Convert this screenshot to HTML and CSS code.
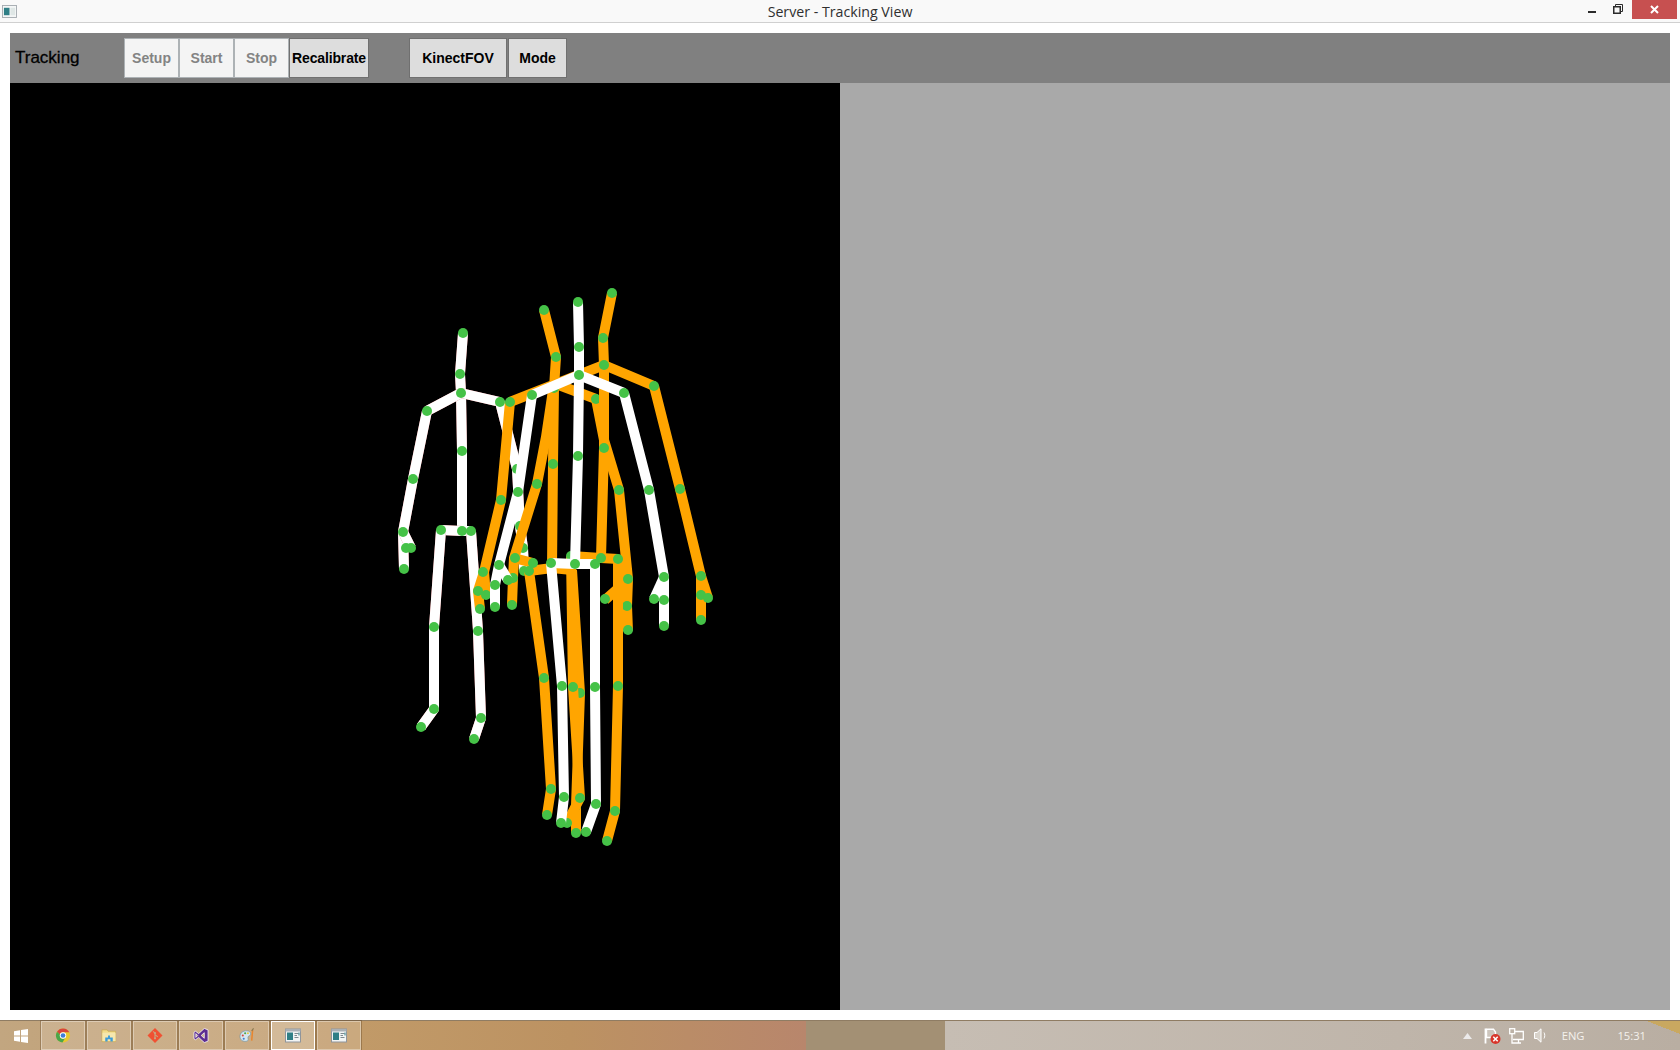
FILE: index.html
```html
<!DOCTYPE html>
<html lang="en">
<head>
    <meta charset="UTF-8">
    <title>Server - Tracking View</title>
    <link rel="stylesheet" href="styles.css">
</head>
<body>
    <header class="titlebar">
        <svg class="app-icon" viewBox="0 0 16 14">
            <rect x="0.5" y="0.5" width="15" height="13" fill="#f4f6f6" stroke="#a4aab0"/>
            <rect x="2" y="3" width="6" height="8" fill="#2f7f86"/>
            <rect x="9" y="3" width="5" height="8" fill="#dfe7e6"/>
        </svg>
        <div class="window-title">Server - Tracking View</div>
        <div class="window-controls">
            <span class="win-min"></span>
            <svg class="win-restore" viewBox="0 0 10 10">
                <path d="M2.5 2.5V0.5H9.5V7.5H7.5" fill="none" stroke="#2b2b2b"/>
                <rect x="0.75" y="2.75" width="6.5" height="6.5" fill="none" stroke="#2b2b2b" stroke-width="1.5"/>
            </svg>
            <span class="win-close">
                <svg viewBox="0 0 9 9"><path d="M1 1L8 8M8 1L1 8" stroke="#fff" stroke-width="2"/></svg>
            </span>
        </div>
    </header>

    <main class="app">
        <div class="toolbar">
            <span class="toolbar-label">Tracking</span>
            <div class="btn-group group-state">
                <button class="btn" disabled>Setup</button>
                <button class="btn" disabled>Start</button>
                <button class="btn" disabled>Stop</button>
                <button class="btn btn-recal">Recalibrate</button>
            </div>
            <div class="btn-group group-view">
                <button class="btn btn-fov">KinectFOV</button>
                <button class="btn btn-mode">Mode</button>
            </div>
        </div>
        <div class="panes">
            <div class="tracking-pane">
                <svg class="tracking-view" viewBox="10 83 830 927">
                    <!-- skeleton 1 -->
                    <g class="skeleton white edged">
                        <polyline points="463,333 460,374 461,393 462,451 462,531"/>
                        <polyline points="427,411 461,393 500,402"/>
                        <polyline points="427,411 413,479 403,532 404,569"/>
                        <polyline points="403,532 411,548"/>
                        <polyline points="500,402 517,469 520,526 523,548 524,571"/>
                        <polyline points="441,530 462,531 471,531"/>
                        <polyline points="441,530 434,627 434,709 421,727"/>
                        <polyline points="471,531 478,631 481,718 474,739"/>
                        <circle cx="463" cy="333"/><circle cx="460" cy="374"/><circle cx="461" cy="393"/>
                        <circle cx="462" cy="451"/><circle cx="462" cy="531"/><circle cx="427" cy="411"/>
                        <circle cx="500" cy="402"/><circle cx="413" cy="479"/><circle cx="403" cy="532"/>
                        <circle cx="406" cy="548"/><circle cx="411" cy="548"/><circle cx="404" cy="569"/>
                        <circle cx="517" cy="469"/><circle cx="520" cy="526"/><circle cx="523" cy="548"/>
                        <circle cx="524" cy="571"/><circle cx="441" cy="530"/><circle cx="471" cy="531"/>
                        <circle cx="434" cy="627"/><circle cx="434" cy="709"/><circle cx="421" cy="727"/>
                        <circle cx="478" cy="631"/><circle cx="481" cy="718"/><circle cx="474" cy="739"/>
                    </g>
                    <!-- skeleton 2 -->
                    <g class="skeleton orange">
                        <polyline points="544,310 556,357 554,388 553,464 552,568"/>
                        <polyline points="556,384 596,399"/>
                        <polyline points="553,390 546,437 537,484 514,558 513,578 512,605"/>
                        <polyline points="514,558 533,563"/>
                        <polyline points="596,399 604,440 619,490 628,579 627,606 628,631"/>
                        <polyline points="605,600 622,585"/>
                        <polyline points="529,571 552,568 572,570"/>
                        <polyline points="529,571 544,678 551,789 547,815"/>
                        <polyline points="572,570 580,693 576,806 576,833"/>
                        <circle cx="544" cy="310"/><circle cx="556" cy="357"/><circle cx="554" cy="388"/>
                        <circle cx="553" cy="464"/><circle cx="596" cy="399"/><circle cx="537" cy="484"/>
                        <circle cx="515" cy="558"/><circle cx="513" cy="578"/><circle cx="512" cy="605"/>
                        <circle cx="533" cy="563"/><circle cx="619" cy="490"/><circle cx="628" cy="579"/>
                        <circle cx="627" cy="606"/><circle cx="628" cy="630"/><circle cx="605" cy="599"/>
                        <circle cx="529" cy="571"/><circle cx="544" cy="678"/><circle cx="551" cy="789"/>
                        <circle cx="547" cy="815"/><circle cx="580" cy="693"/><circle cx="576" cy="806"/>
                        <circle cx="576" cy="833"/>
                    </g>
                    <!-- skeleton 3 -->
                    <g class="skeleton orange">
                        <polyline points="612,293 603,338 604,365 604,448 601,558"/>
                        <polyline points="510,402 604,365 654,386"/>
                        <polyline points="510,402 501,500 484,572 478,591 480,609"/>
                        <polyline points="484,572 486,595"/>
                        <polyline points="654,386 680,489 701,576 701,595 701,620"/>
                        <polyline points="701,576 708,598"/>
                        <polyline points="571,556 601,558 618,559"/>
                        <polyline points="571,556 573,687 580,798 567,823"/>
                        <polyline points="618,559 618,686 615,811 607,841"/>
                        <circle cx="612" cy="293"/><circle cx="603" cy="338"/><circle cx="604" cy="365"/>
                        <circle cx="604" cy="448"/><circle cx="601" cy="558"/><circle cx="510" cy="402"/>
                        <circle cx="654" cy="386"/><circle cx="501" cy="500"/><circle cx="483" cy="572"/>
                        <circle cx="478" cy="591"/><circle cx="486" cy="595"/><circle cx="480" cy="609"/>
                        <circle cx="680" cy="489"/><circle cx="701" cy="576"/><circle cx="701" cy="595"/>
                        <circle cx="708" cy="598"/><circle cx="701" cy="620"/><circle cx="571" cy="556"/>
                        <circle cx="618" cy="559"/><circle cx="573" cy="687"/><circle cx="580" cy="798"/>
                        <circle cx="567" cy="823"/><circle cx="618" cy="686"/><circle cx="615" cy="811"/>
                        <circle cx="607" cy="841"/>
                    </g>
                    <!-- skeleton 4 -->
                    <g class="skeleton white">
                        <polyline points="578,302 579,347 579,375 578,456 575,564"/>
                        <polyline points="532,395 579,375 624,393"/>
                        <polyline points="532,395 518,492 499,565 495,585 495,607"/>
                        <polyline points="499,565 508,580"/>
                        <polyline points="624,393 649,490 664,577 664,600 664,626"/>
                        <polyline points="664,577 654,599"/>
                        <polyline points="551,563 575,564 595,564"/>
                        <polyline points="551,563 562,686 564,797 561,823"/>
                        <polyline points="595,564 595,687 596,804 586,832"/>
                        <circle cx="578" cy="302"/><circle cx="579" cy="347"/><circle cx="579" cy="375"/>
                        <circle cx="578" cy="456"/><circle cx="575" cy="564"/><circle cx="532" cy="395"/>
                        <circle cx="624" cy="393"/><circle cx="518" cy="492"/><circle cx="499" cy="565"/>
                        <circle cx="495" cy="585"/><circle cx="495" cy="607"/><circle cx="508" cy="580"/>
                        <circle cx="649" cy="490"/><circle cx="664" cy="577"/><circle cx="664" cy="600"/>
                        <circle cx="664" cy="626"/><circle cx="654" cy="599"/><circle cx="551" cy="563"/>
                        <circle cx="595" cy="564"/><circle cx="562" cy="686"/><circle cx="564" cy="797"/>
                        <circle cx="561" cy="823"/><circle cx="595" cy="687"/><circle cx="596" cy="804"/>
                        <circle cx="586" cy="832"/>
                    </g>
                </svg>
            </div>
            <div class="side-pane"></div>
        </div>
    </main>

    <footer class="taskbar">
        <div class="start">
            <svg viewBox="0 0 14 14"><path d="M0 2.2L6 1.2V6.4H0ZM7 1L14 0V6.4H7ZM0 7.5H6V12.8L0 11.8ZM7 7.5H14V14L7 13Z" fill="#fff"/></svg>
        </div>
        <div class="task">
            <svg viewBox="0 0 16 16">
                <circle cx="8" cy="8" r="7.5" fill="#e8c730"/>
                <path d="M1.6 4A7.5 7.5 0 0 1 14.7 4.6H8A3.4 3.4 0 0 0 4.8 7Z" fill="#d8453a"/>
                <path d="M1.6 4A7.5 7.5 0 0 0 7.4 15.5L10.5 10.4A3.4 3.4 0 0 1 4.8 7Z" fill="#4aa64a"/>
                <circle cx="8" cy="8" r="3.4" fill="#fff"/><circle cx="8" cy="8" r="2.5" fill="#3f7fd8"/>
            </svg>
        </div>
        <div class="task">
            <svg viewBox="0 0 16 16">
                <path d="M0.5 2H6L7 3.5H15V14.5H0.5Z" fill="#f3dc8a" stroke="#c9a94e" stroke-width="0.7"/>
                <rect x="1" y="5" width="14" height="9" fill="#f6e7ad"/>
                <path d="M4 14.5V10H7V8H9V10H12V14.5H9.5V12H6.5V14.5Z" fill="#3c9bd8"/>
            </svg>
        </div>
        <div class="task">
            <svg viewBox="0 0 16 16">
                <path d="M8 0L16 8L8 16L0 8Z" fill="#f05133"/>
                <path d="M6 3.5L8 5.5V11M8 7L11 9.5" stroke="#c9a27e" stroke-width="1.2" fill="none"/>
                <circle cx="8" cy="5.5" r="1.2" fill="#c9a27e"/><circle cx="8" cy="11" r="1.2" fill="#c9a27e"/>
            </svg>
        </div>
        <div class="task">
            <svg viewBox="0 0 16 16">
                <path d="M11.5 0.5L15.5 2V14L11.5 15.5L5.5 10L2.2 12.5L0.5 11.5V4.5L2.2 3.5L5.5 6ZM11.5 5L8.2 8L11.5 11ZM2.5 6V10L4.5 8Z" fill="#5c2d91" stroke="#fff" stroke-width="0.8"/>
            </svg>
        </div>
        <div class="task">
            <svg viewBox="0 0 16 16">
                <path d="M0.5 9C0.5 5 4 3 7.5 3C10.5 3 12 4.5 12 6.5C12 8.5 9 8 9 10C9 12 10 13 8 14C4 15 0.5 13 0.5 9Z" fill="#d5e6ee" stroke="#6f94a8" stroke-width="0.7"/>
                <circle cx="3.5" cy="8" r="1.1" fill="#d8453a"/><circle cx="6" cy="5.5" r="1.1" fill="#4aa64a"/>
                <circle cx="9" cy="5.5" r="1" fill="#e8c730"/><circle cx="4.5" cy="11.5" r="1.1" fill="#3f7fd8"/>
                <path d="M13 13.5L14 2" stroke="#e8862f" stroke-width="1.6"/><path d="M13 3L15 0.5" stroke="#8a7a50" stroke-width="1.2"/>
            </svg>
        </div>
        <div class="task task-active">
            <svg viewBox="0 0 16 14">
                <rect x="0.5" y="0.5" width="15" height="13" fill="#f2f4f4" stroke="#8f959b"/>
                <rect x="0.5" y="0.5" width="15" height="2.5" fill="#aab0b6"/>
                <rect x="2" y="4" width="6" height="7.5" fill="#2f7f86"/>
                <path d="M9.5 5H13.5M9.5 7H12M9.5 9H13.5" stroke="#7d8a90"/><rect x="13.5" y="4" width="1" height="3" fill="#2f7f86"/>
            </svg>
        </div>
        <div class="task">
            <svg viewBox="0 0 16 14">
                <rect x="0.5" y="0.5" width="15" height="13" fill="#f2f4f4" stroke="#8f959b"/>
                <rect x="0.5" y="0.5" width="15" height="2.5" fill="#aab0b6"/>
                <rect x="2" y="4" width="6" height="7.5" fill="#2f7f86"/>
                <path d="M9.5 5H13.5M9.5 7H12M9.5 9H13.5" stroke="#7d8a90"/><rect x="13.5" y="4" width="1" height="3" fill="#2f7f86"/>
            </svg>
        </div>

        <div class="tray">
            <svg class="tray-arrow" viewBox="0 0 9 6"><path d="M4.5 0L9 6H0Z" fill="#eceaea"/></svg>
            <svg class="tray-flag" viewBox="0 0 17 16">
                <path d="M1.5 0.5V15.5" stroke="#fff" stroke-width="1.8"/>
                <path d="M2.5 1.2H9.5L11.5 4V9.5H2.5Z" fill="rgba(255,255,255,0.25)" stroke="#fff" stroke-width="1.4"/>
                <circle cx="11.5" cy="11" r="5" fill="#d8352a"/>
                <path d="M9.3 8.8L13.7 13.2M13.7 8.8L9.3 13.2" stroke="#fff" stroke-width="1.5"/>
            </svg>
            <svg class="tray-net" viewBox="0 0 15 16" fill="none" stroke="#fff" stroke-width="1.3">
                <rect x="0.7" y="0.7" width="5" height="5"/>
                <path d="M5.7 3.5H14.3V11.5H4"/>
                <path d="M3 5.7V15H12M9.5 11.5V15"/>
            </svg>
            <svg class="tray-vol" viewBox="0 0 13 15" fill="none" stroke="#fff">
                <path d="M0.5 4.5H3L7 0.8V14.2L3 10.5H0.5Z" fill="#d8d2ca"/>
                <path d="M10 4.5C11 6 11 9 10 10.5"/>
            </svg>
            <span class="tray-lang">ENG</span>
            <span class="tray-clock">15:31</span>
        </div>
    </footer>
</body>
</html>
```

FILE: styles.css
```css
html, body {
    margin: 0;
    padding: 0;
}
body {
    width: 1680px;
    height: 1050px;
    overflow: hidden;
    background-color: #fff;
    display: flex;
    flex-direction: column;
    font-family: "Liberation Sans", Arial, sans-serif;
}

/* window chrome */
.titlebar {
    height: 22px;
    flex: none;
    display: grid;
    grid-template-columns: 1fr auto 1fr;
    align-items: center;
    background-color: #f9f9f9;
    border-bottom: 1px solid #d0d0d0;
}
.app-icon {
    width: 15px;
    height: 13px;
    margin-left: 2px;
}
.window-title {
    font-family: "Open Sans", sans-serif;
    font-size: 14.2px;
    color: #2f2f2f;
}
.window-controls {
    display: flex;
    justify-content: flex-end;
    align-self: start;
    padding-right: 3px;
}
.win-min {
    width: 8px;
    height: 2px;
    margin-top: 11px;
    margin-right: 17px;
    background-color: #2b2b2b;
}
.win-restore {
    width: 10px;
    height: 10px;
    margin-top: 4px;
    margin-right: 9px;
}
.win-close {
    width: 45px;
    height: 19px;
    background-color: #c75050;
    display: flex;
    align-items: center;
    justify-content: center;
}
.win-close svg {
    width: 9px;
    height: 9px;
}

/* app */
.app {
    flex: 1;
    padding: 10px;
    display: flex;
    flex-direction: column;
    min-height: 0;
}
.toolbar {
    height: 50px;
    flex: none;
    display: flex;
    align-items: center;
    background-color: #808080;
}
.toolbar-label {
    width: 114px;
    padding-left: 5px;
    box-sizing: border-box;
    font-size: 17px;
    color: #000;
    -webkit-text-stroke: 0.3px #000;
}
.btn-group {
    display: flex;
    height: 40px;
}
.group-view {
    margin-left: 40px;
}
.btn {
    width: 55px;
    height: 40px;
    padding: 0;
    margin: 0;
    font-family: "Liberation Sans", Arial, sans-serif;
    font-size: 14px;
    font-weight: bold;
    color: #000;
    background-color: #dddddd;
    border: 1px solid #707070;
    box-sizing: border-box;
}
.btn:disabled {
    color: #838383;
    background-color: #f4f4f4;
    border-color: #adb2b5;
}
.btn-recal {
    width: 80px;
    letter-spacing: -0.15px;
}
.btn-fov {
    width: 98px;
    margin-right: 1px;
}
.btn-mode {
    width: 59px;
}
.panes {
    flex: 1;
    display: flex;
    min-height: 0;
}
.tracking-pane {
    width: 830px;
    background-color: #000;
}
.tracking-view {
    display: block;
    width: 830px;
    height: 927px;
}
.side-pane {
    flex: 1;
    background-color: #a9a9a9;
}

/* skeletons */
.skeleton polyline {
    fill: none;
    stroke-width: 10;
    stroke-linejoin: round;
}
.skeleton circle {
    r: 5px;
    fill: #45c247;
}
.skeleton.white polyline {
    stroke: #fff;
}
.skeleton.orange polyline {
    stroke: #ffa500;
}
.skeleton.edged polyline {
    filter: drop-shadow(0 0 0.6px #d86a6a);
}

/* taskbar */
.taskbar {
    height: 30px;
    flex: none;
    box-sizing: border-box;
    display: flex;
    border-top: 1px solid #8f7c63;
    background:
        linear-gradient(to top right, transparent 50%, #c9a860 50%) right top / 33px 13px no-repeat,
        linear-gradient(90deg, #c2a680 0, #c19a68 360px, #bc9262 570px, #b8866c 806px, #a39074 806px, #a39074 945px, #c6bdb3 945px, #bfb5aa 1400px, #b9aea2 1680px);
}
.start {
    width: 41px;
    display: flex;
    align-items: center;
    justify-content: center;
}
.start svg {
    width: 14px;
    height: 14px;
}
.task {
    width: 44px;
    margin-right: 2px;
    box-sizing: border-box;
    display: flex;
    align-items: center;
    justify-content: center;
    background-color: rgba(255, 255, 255, 0.15);
    border: 1px solid rgba(255, 255, 255, 0.35);
    box-shadow: 0 0 0 1px rgba(90, 60, 30, 0.35);
}
.task svg {
    width: 16px;
    height: 15px;
}
.task-active {
    background-color: rgba(255, 255, 255, 0.3);
    border-color: #fff;
}
.tray {
    margin-left: auto;
    display: flex;
    align-items: center;
    color: #f4f1ec;
    font-family: "Open Sans", sans-serif;
    font-size: 11.2px;
    padding-right: 34px;
}
.tray-arrow {
    width: 9px;
    height: 6px;
    margin-right: 12px;
}
.tray-flag {
    width: 17px;
    height: 16px;
    margin-right: 8px;
}
.tray-net {
    width: 15px;
    height: 16px;
    margin-right: 10px;
}
.tray-vol {
    width: 13px;
    height: 15px;
    margin-right: 15px;
}
.tray-lang {
    margin-right: 33px;
}
```
